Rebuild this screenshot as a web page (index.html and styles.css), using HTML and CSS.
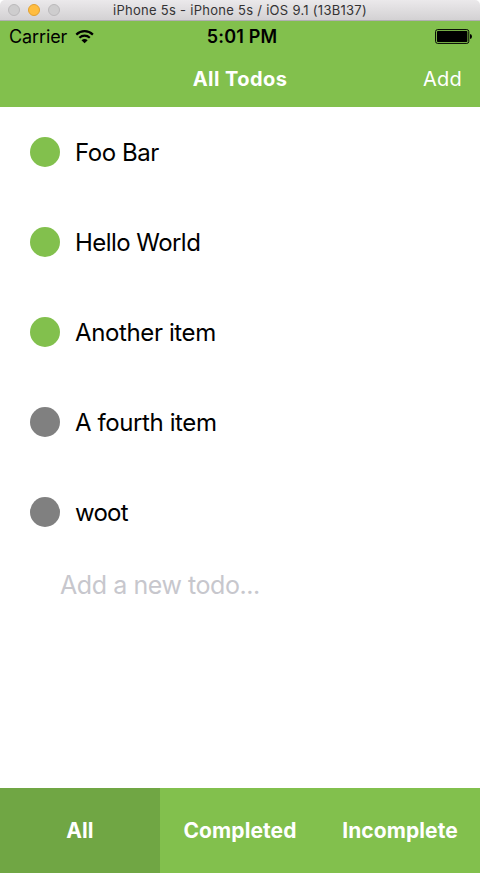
FILE: index.html
```html
<!DOCTYPE html>
<html lang="en">
<head>
<meta charset="utf-8">
<title>All Todos</title>
<link rel="stylesheet" href="styles.css">
</head>
<body>
<div class="window">
  <div class="titlebar">
    <div class="lights"><i class="light"></i><i class="light amber"></i><i class="light"></i></div>
    <span class="window-title">iPhone 5s - iPhone 5s / iOS 9.1 (13B137)</span>
  </div>
  <header class="header">
    <div class="status">
      <div class="carrier"><span>Carrier</span>
        <svg class="wifi" width="20" height="16" viewBox="0 0 20 16">
          <path d="M1.3 5.6C6.1 1 13.1 1 17.9 5.6M4.4 8.7C7.4 5.9 11.8 5.9 14.8 8.7" fill="none" stroke="#000" stroke-width="2.2"/>
          <path d="M9.6 14.3L6.5 11.2Q9.6 8.6 12.7 11.2Z"/>
        </svg>
      </div>
      <span class="time">5:01 PM</span>
      <svg class="battery" width="38" height="15" viewBox="0 0 38 15">
        <rect x=".6" y=".6" width="33.2" height="13.8" rx="2" fill="none" stroke="#000"/>
        <rect x="2" y="2" width="30.4" height="11" rx=".8"/>
        <path d="M35 5Q37 5.3 37 7.5T35 10Z"/>
      </svg>
    </div>
    <div class="nav"><h1 class="title">All Todos</h1><span class="add">Add</span></div>
  </header>
  <main class="content">
    <ul class="todos">
      <li class="todo"><i class="dot done"></i><span class="t1">Foo Bar</span></li>
      <li class="todo"><i class="dot done"></i><span class="t2">Hello World</span></li>
      <li class="todo"><i class="dot done"></i><span class="t3">Another item</span></li>
      <li class="todo"><i class="dot"></i><span class="t4">A fourth item</span></li>
      <li class="todo"><i class="dot"></i><span class="t5">woot</span></li>
    </ul>
    <div class="new-todo">Add a new todo...</div>
  </main>
  <nav class="tabs">
    <div class="tab active"><span>All</span></div>
    <div class="tab"><span>Completed</span></div>
    <div class="tab"><span>Incomplete</span></div>
  </nav>
</div>
</body>
</html>
```
FILE: styles.css
```css
* { box-sizing: border-box; }
body { margin: 0; background: #fff; font-family: Inter, "Liberation Sans", sans-serif; color: #000; }
.window { width: 480px; height: 873px; display: flex; flex-direction: column; overflow: hidden; }
.titlebar { height: 21px; flex: none; display: grid; grid-template-columns: 70px 1fr 70px; align-items: center; background: linear-gradient(#ebe9eb, #d3d1d3); border-bottom: 1px solid #b1afb1; border-radius: 5px 5px 0 0; }
.lights { display: flex; gap: 8px; padding-left: 8px; }
.light { width: 12px; height: 12px; border-radius: 50%; background: #cecdce; border: 1px solid #bbb9bb; }
.amber { background: #ffbd40; border-color: #e2a02f; }
.window-title { text-align: center; font-size: 13px; line-height: 20px; letter-spacing: .28px; color: #343334; white-space: nowrap; }
.header { height: 86px; flex: none; background: #82c04d; }
.status { height: 31px; display: grid; grid-template-columns: 1fr auto 1fr; align-items: center; padding: 0 7px 0 9px; }
.carrier { display: flex; align-items: center; gap: 8px; font-size: 18px; letter-spacing: -.1px; }
.time { font-size: 18px; font-weight: 600; letter-spacing: .15px; padding-left: 2px; }
.battery { justify-self: end; }
.nav { height: 53px; display: grid; grid-template-columns: 1fr auto 1fr; align-items: center; padding: 0 18px; color: #fff; }
.title { grid-column: 2; margin: 0; font-size: 20px; line-height: 26px; font-weight: 700; letter-spacing: .45px; }
.add { justify-self: end; font-size: 20px; letter-spacing: .2px; }
.content { flex: 1; }
.todos { list-style: none; margin: 0; padding: 0; }
.todo { height: 90px; padding-left: 30px; display: flex; align-items: center; gap: 15px; font-size: 24px; }
.dot { width: 30px; height: 30px; border-radius: 50%; background: #808080; }
.done { background: #82c04d; }
.t1 { letter-spacing: -.45px; }
.t2 { letter-spacing: -.55px; }
.t3 { letter-spacing: -.38px; }
.t4 { letter-spacing: -.4px; }
.t5 { letter-spacing: -.75px; }
.new-todo { padding-left: 60px; font-size: 25px; line-height: 30px; margin-top: 13px; letter-spacing: -.43px; color: #c7c7cd; }
.tabs { height: 85px; flex: none; display: grid; grid-template-columns: repeat(3, 1fr); background: #82c04d; color: #fff; }
.tab { display: flex; align-items: center; justify-content: center; font-size: 21px; font-weight: 700; letter-spacing: .08px; }
.active { background: #70a644; }
```
